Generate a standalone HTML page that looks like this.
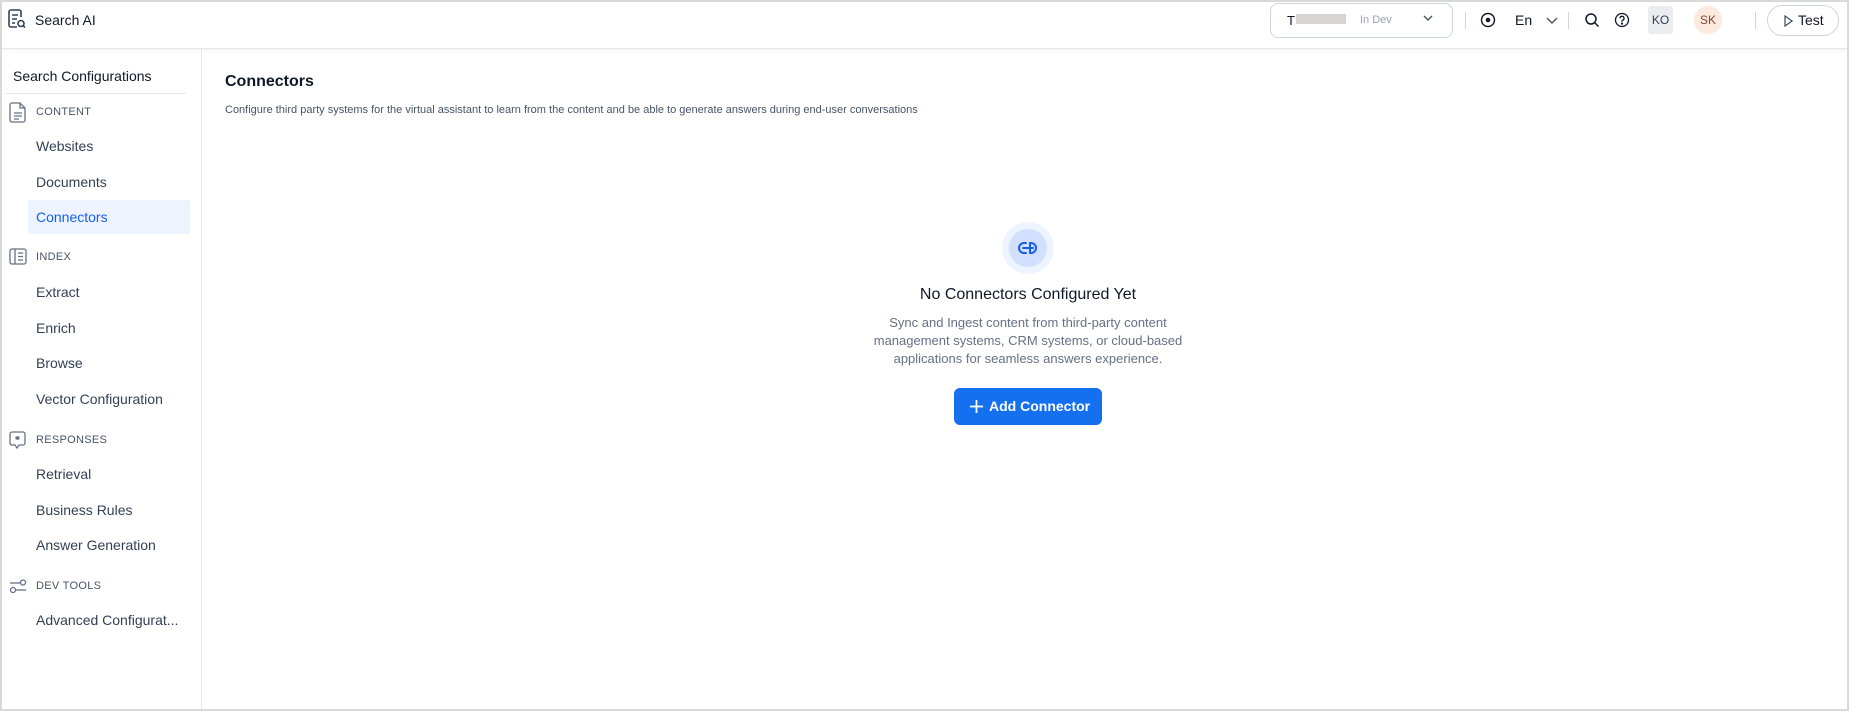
<!DOCTYPE html>
<html><head><meta charset="utf-8"><style>
*{box-sizing:border-box;margin:0;padding:0}
body{width:1849px;height:711px;overflow:hidden;background:#fff;font-family:"Liberation Sans",Arial,sans-serif;color:#101828;position:relative}
.frame{position:absolute;inset:0;border:2px solid #d9d9d9;pointer-events:none;z-index:5}
.abs{position:absolute;white-space:nowrap}
.sec{position:absolute;left:36px;font-size:11px;color:#475467;letter-spacing:.3px;white-space:nowrap}
.it{position:absolute;left:36px;font-size:14px;color:#344054;white-space:nowrap}
.ic{position:absolute;left:9px}
.vd{position:absolute;top:12px;width:1px;height:17px;background:#d0d5dd}
</style></head><body>
<div class="frame"></div>
<div class="abs" style="left:0;top:0;width:1849px;height:49px;border-bottom:1px solid #e4e7ec;box-shadow:0 1px 3px rgba(0,0,0,.06);background:#fff"></div>
<svg class="abs" style="left:8px;top:9px" width="18" height="20" viewBox="0 0 18 20" fill="none" stroke="#344054" stroke-width="1.6"><path d="M13 8V3a2 2 0 0 0-2-2H3a2 2 0 0 0-2 2v13a2 2 0 0 0 2 2h6"/><path d="M4 6h6M4 10h5M4 14h3"/><circle cx="13" cy="14.5" r="3"/><path d="M15.2 16.7 17 18.5"/></svg>
<div class="abs" style="left:35px;top:12px;font-size:14px;color:#101828">Search AI</div>

<div class="abs" style="left:1270px;top:3px;width:183px;height:35px;border:1px solid #d0d5dd;border-radius:8px"></div>
<div class="abs" style="left:1287px;top:13px;font-size:13px;color:#101828">T</div>
<div class="abs" style="left:1296px;top:14px;width:50px;height:10px;background:#d8d4d4"></div>
<div class="abs" style="left:1360px;top:14px;font-size:11px;color:#98a2b3">In Dev</div>
<svg class="abs" style="left:1423px;top:15px" width="10" height="7" viewBox="0 0 10 7" fill="none" stroke="#475467" stroke-width="1.4"><path d="M1 1l4 4 4-4"/></svg>
<div class="vd" style="left:1465px"></div>
<svg class="abs" style="left:1480px;top:12px" width="16" height="16" viewBox="0 0 16 16" fill="none" stroke="#101828" stroke-width="1.4"><circle cx="8" cy="8" r="6.5"/><circle cx="8" cy="8" r="1.6" fill="#101828"/></svg>
<div class="abs" style="left:1515px;top:12px;font-size:14px;color:#101828">En</div>
<svg class="abs" style="left:1546px;top:17px" width="12" height="8" viewBox="0 0 12 8" fill="none" stroke="#475467" stroke-width="1.4"><path d="M1 1l5 5 5-5"/></svg>
<div class="vd" style="left:1568px"></div>
<svg class="abs" style="left:1584px;top:12px" width="16" height="16" viewBox="0 0 16 16" fill="none" stroke="#101828" stroke-width="1.5"><circle cx="7" cy="7" r="5"/><path d="M11 11l3.5 3.5"/></svg>
<svg class="abs" style="left:1614px;top:12px" width="16" height="16" viewBox="0 0 16 16" fill="none" stroke="#101828" stroke-width="1.3"><circle cx="8" cy="8" r="6.5"/><path d="M6 6.3a2 2 0 1 1 2.6 1.9c-.4.2-.6.5-.6 1v.6"/><circle cx="8" cy="11.6" r=".5" fill="#101828"/></svg>
<div class="abs" style="left:1648px;top:6px;width:25px;height:28px;background:#eaecf0;border-radius:3px;font-size:12px;color:#344054;text-align:center;line-height:28px">KO</div>
<div class="abs" style="left:1694px;top:6px;width:28px;height:28px;background:#fdeade;border-radius:50%;font-size:12px;color:#7a4a3a;text-align:center;line-height:28px">SK</div>
<div class="vd" style="left:1755px"></div>
<div class="abs" style="left:1767px;top:5px;width:72px;height:31px;border:1px solid #d0d5dd;border-radius:16px"></div>
<svg class="abs" style="left:1784px;top:15px" width="9" height="12" viewBox="0 0 9 12" fill="none" stroke="#475467" stroke-width="1.3"><path d="M1 1l7 5-7 5z"/></svg>
<div class="abs" style="left:1798px;top:12px;font-size:14px;color:#101828">Test</div>

<div class="abs" style="left:0;top:49px;width:202px;height:662px;border-right:1px solid #e4e7ec"></div>
<div class="abs" style="left:13px;top:68px;font-size:14px;color:#101828">Search Configurations</div>
<div class="abs" style="left:5px;top:93px;width:181px;height:1px;background:#e4e7ec"></div>

<svg class="ic" style="top:102px" width="18" height="21" viewBox="0 0 18 21" fill="none" stroke="#667085" stroke-width="1.3"><path d="M3 1h8l5 5v12a2 2 0 0 1-2 2H3a2 2 0 0 1-2-2V3a2 2 0 0 1 2-2z"/><path d="M11 1v5h5M5 11h8M5 14h8M5 17h5"/></svg>
<div class="sec" style="top:106px">CONTENT</div>
<div class="it" style="top:138px">Websites</div>
<div class="it" style="top:174px">Documents</div>
<div class="abs" style="left:28px;top:200px;width:162px;height:34px;background:#eef4ff;border-radius:2px"></div>
<div class="it" style="top:209px;color:#155eef">Connectors</div>
<svg class="ic" style="top:248px" width="18" height="17" viewBox="0 0 18 17" fill="none" stroke="#667085" stroke-width="1.3"><rect x="1" y="1" width="16" height="15" rx="2"/><path d="M6 1v15M9 5h5M9 8.5h5M9 12h5"/></svg>
<div class="sec" style="top:251px">INDEX</div>
<div class="it" style="top:284px">Extract</div>
<div class="it" style="top:320px">Enrich</div>
<div class="it" style="top:355px">Browse</div>
<div class="it" style="top:391px">Vector Configuration</div>
<svg class="ic" style="top:431px" width="17" height="18" viewBox="0 0 17 18" fill="none" stroke="#667085" stroke-width="1.3"><path d="M3 1h11a2 2 0 0 1 2 2v9a2 2 0 0 1-2 2h-4l-2 3-2-3H3a2 2 0 0 1-2-2V3a2 2 0 0 1 2-2z"/><path d="M8.5 5v4M6.5 6l4 2M10.5 6l-4 2"/></svg>
<div class="sec" style="top:434px">RESPONSES</div>
<div class="it" style="top:466px">Retrieval</div>
<div class="it" style="top:502px">Business Rules</div>
<div class="it" style="top:537px">Answer Generation</div>
<svg class="ic" style="top:579px" width="18" height="14" viewBox="0 0 18 14" fill="none" stroke="#667085" stroke-width="1.3"><path d="M1 4h10"/><circle cx="14" cy="3.5" r="2.5"/><path d="M17 11H7"/><circle cx="4" cy="11" r="2.5"/></svg>
<div class="sec" style="top:580px">DEV TOOLS</div>
<div class="it" style="top:612px">Advanced Configurat...</div>

<div class="abs" style="left:225px;top:73px;font-size:16px;font-weight:bold;color:#101828">Connectors</div>
<div class="abs" style="left:225px;top:104px;font-size:11px;color:#475467">Configure third party systems for the virtual assistant to learn from the content and be able to generate answers during end-user conversations</div>

<div class="abs" style="left:1002px;top:222px;width:52px;height:52px;border-radius:50%;background:#eef4ff"></div>
<div class="abs" style="left:1009px;top:229px;width:38px;height:38px;border-radius:50%;background:#d1e0ff"></div>
<svg class="abs" style="left:1018px;top:241px" width="20" height="14" viewBox="0 0 20 14" fill="none" stroke="#155eef" stroke-width="2" stroke-linecap="round"><path d="M8 2H6a5 5 0 0 0 0 10h2M12 2h1a5 5 0 0 1 0 10h-1M12 2v10M5 7h10"/></svg>
<div class="abs" style="left:828px;top:286px;width:400px;text-align:center;font-size:16px;color:#101828">No Connectors Configured Yet</div>
<div class="abs" style="left:828px;top:314px;width:400px;text-align:center;font-size:13px;line-height:18px;color:#667085">Sync and Ingest content from third-party content<br>management systems, CRM systems, or cloud-based<br>applications for seamless answers experience.</div>
<div class="abs" style="left:954px;top:388px;width:148px;height:37px;background:#1570ef;border-radius:6px;color:#fff;font-size:14px;font-weight:bold;line-height:37px;padding-left:16px">
 <svg style="vertical-align:-2px;margin-right:6px" width="13" height="13" viewBox="0 0 13 13" stroke="#fff" stroke-width="1.8"><path d="M6.5 0v13M0 6.5h13"/></svg>Add Connector</div>
</body></html>
